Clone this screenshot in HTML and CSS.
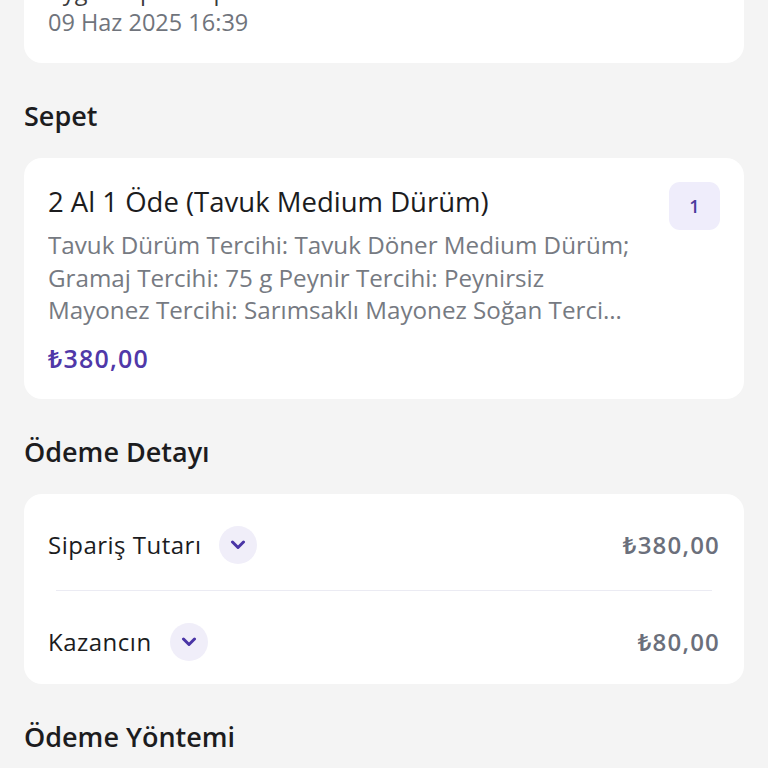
FILE: index.html
```html
<!DOCTYPE html>
<html>
  <head>
    <title>Sipariş Detayı</title>
    <link rel="stylesheet" href="styles.css">
  </head>
  <body>
    <div class="page">
      <div class="card info-card">
        <p class="info-line">Aygül Tepe · Kapıda Ödeme · Teslimat Adresi</p>
        <p class="info-date">09 Haz 2025 16:39</p>
      </div>

      <h2 class="section-title">Sepet</h2>
      <div class="card basket-card">
        <div class="basket-main">
          <div class="basket-title">2 Al 1 Öde (Tavuk Medium Dürüm)</div>
          <div class="basket-desc">Tavuk Dürüm Tercihi: Tavuk Döner Medium Dürüm;<br>Gramaj Tercihi: 75 g Peynir Tercihi: Peynirsiz<br>Mayonez Tercihi: Sarımsaklı Mayonez Soğan Tercihi: Soğanlı</div>
          <div class="basket-price">₺380,00</div>
        </div>
        <div class="qty-badge">1</div>
      </div>

      <h2 class="section-title">Ödeme Detayı</h2>
      <div class="card pay-card">
        <div class="pay-row">
          <span class="pay-label">Sipariş Tutarı</span>
          <span class="chevron-btn">
            <svg width="16" height="10" viewBox="0 0 16 10"><path d="M2.5 2 L8 7.5 L13.5 2" fill="none" stroke="#4a35a6" stroke-width="3" stroke-linecap="round" stroke-linejoin="round"/></svg>
          </span>
          <span class="pay-amount">₺380,00</span>
        </div>
        <div class="pay-divider"></div>
        <div class="pay-row last">
          <span class="pay-label">Kazancın</span>
          <span class="chevron-btn">
            <svg width="16" height="10" viewBox="0 0 16 10"><path d="M2.5 2 L8 7.5 L13.5 2" fill="none" stroke="#4a35a6" stroke-width="3" stroke-linecap="round" stroke-linejoin="round"/></svg>
          </span>
          <span class="pay-amount">₺80,00</span>
        </div>
      </div>

      <h2 class="section-title">Ödeme Yöntemi</h2>
    </div>
  </body>
</html>
```

FILE: styles.css
```css
body {
  margin: 0;
  background-color: #f4f4f4;
  font-family: "Open Sans", "Noto Sans", sans-serif;
  color: #1c1c1e;
}

.page {
  padding: 0 24px;
}

.card {
  background-color: #ffffff;
  border-radius: 18px;
}

.info-card {
  margin-top: -38px;
  padding: 20px 24px 27px;
}

.info-line,
.info-date {
  margin: 0;
  font-size: 23.5px;
}

.info-line {
  line-height: 18px;
  margin-bottom: 8px;
  color: #3a3a3c;
}

.info-date {
  line-height: 28px;
  color: #70747c;
}

.section-title {
  margin: 37px 0 26px;
  font-size: 27px;
  line-height: 32px;
  font-weight: 600;
  color: #1c1c1e;
}

.basket-card {
  display: flex;
  align-items: flex-start;
  gap: 24px;
  padding: 24px 24px 25px;
}

.basket-main {
  flex: 1;
  min-width: 0;
}

.basket-title {
  font-size: 27.5px;
  line-height: 40px;
  color: #1c1c1e;
}

.basket-desc {
  max-width: 586px;
  margin-top: 7px;
  font-size: 24.2px;
  line-height: 32.5px;
  color: #767a82;
  display: -webkit-box;
  -webkit-box-orient: vertical;
  -webkit-line-clamp: 3;
  overflow: hidden;
}

.basket-price {
  margin-top: 15px;
  font-size: 25px;
  line-height: 32px;
  font-weight: 600;
  letter-spacing: 1.2px;
  color: #5038a8;
}

.qty-badge {
  width: 51px;
  height: 48px;
  border-radius: 11px;
  background-color: #efedfb;
  color: #4a3c9c;
  font-size: 18px;
  font-weight: 600;
  display: flex;
  align-items: center;
  justify-content: center;
}

.pay-row {
  display: flex;
  align-items: center;
  padding: 31px 24px 25px;
}

.pay-row.last {
  padding-bottom: 22px;
}

.pay-label {
  font-size: 24px;
  line-height: 40px;
  font-weight: 500;
  letter-spacing: 0.5px;
  color: #1c1c1e;
}

.chevron-btn {
  width: 38px;
  height: 38px;
  margin-left: 18px;
  border-radius: 50%;
  background-color: #f0eef9;
  display: flex;
  align-items: center;
  justify-content: center;
}

.pay-amount {
  margin-left: auto;
  font-size: 24px;
  font-weight: 600;
  letter-spacing: 1.2px;
  color: #6b6f7b;
}

.pay-divider {
  height: 1px;
  margin: 0 32px;
  background-color: #ebebf3;
}
```
